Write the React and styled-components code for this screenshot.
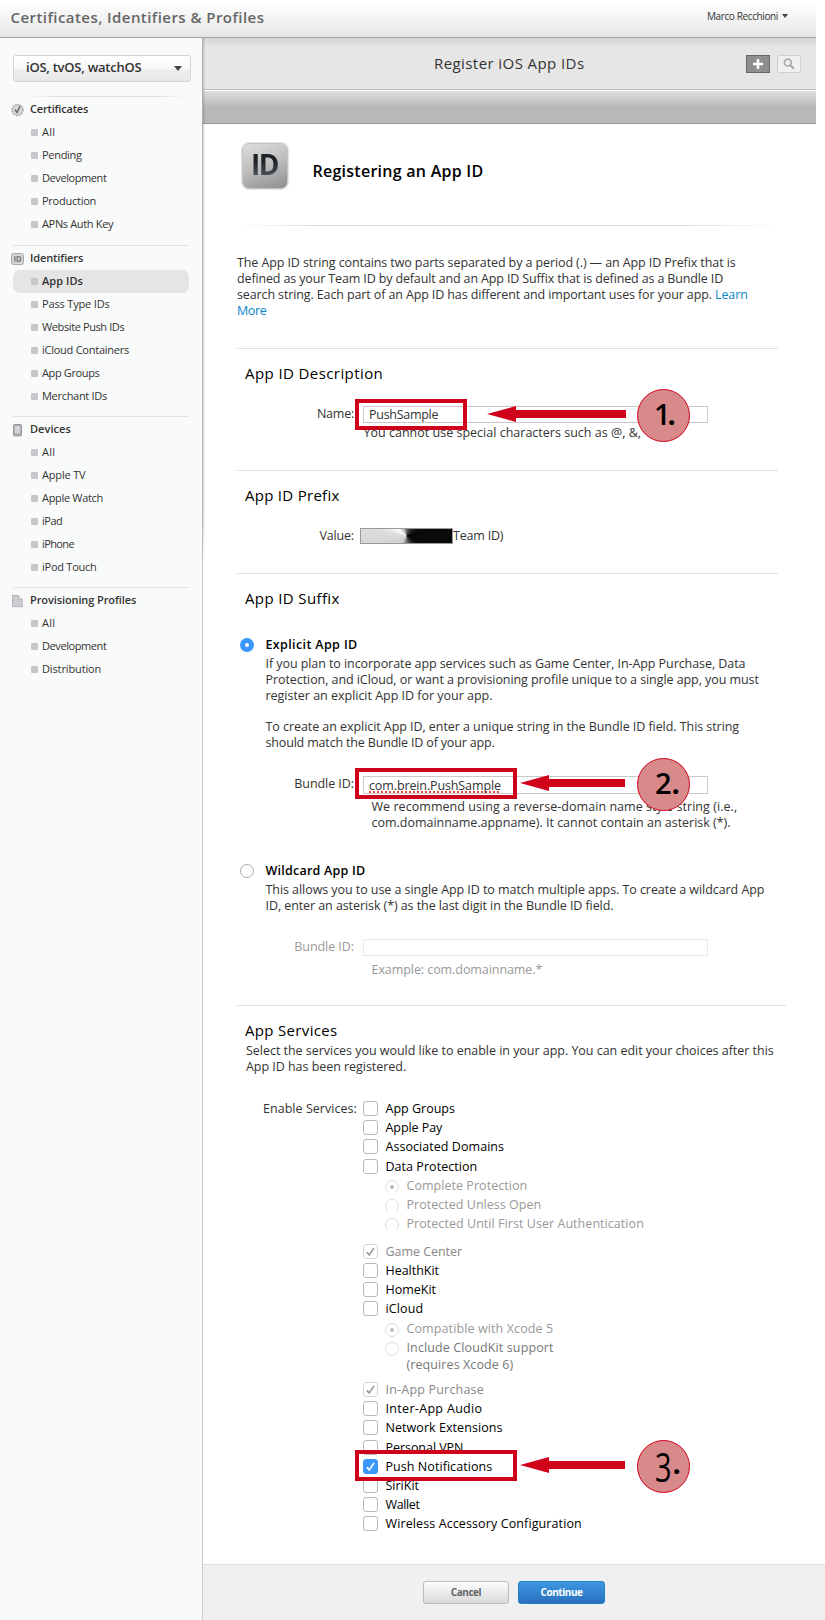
import React from "react";
import styled, { createGlobalStyle, css } from "styled-components";

const Global = createGlobalStyle`
  * { box-sizing: border-box; }
  body { margin: 0; background: #fff; }
  h1, h2, h3, h4, p, ul { margin: 0; padding: 0; font-weight: 400; }
`;

const Page = styled.div`
  position: relative;
  width: 825px;
  height: 1620px;
  overflow: hidden;
  background: #fff;
  color: #333;
  font: 400 12.5px/16px "Open Sans", "Noto Sans", sans-serif;
  font-variant-ligatures: none;
  white-space: nowrap;
`;

const Header = styled.header`
  display: flex;
  justify-content: space-between;
  width: 816px;
  height: 38px;
  padding: 0 28px 0 10.5px;
  background: linear-gradient(#fff, #f6f6f6 40%, #e6e6e6);
  border-bottom: 1px solid #a5a5a5;
`;
const SiteTitle = styled.h1`
  font-size: 15px;
  font-weight: 600;
  line-height: 34px;
  letter-spacing: 0.44px;
  color: #666;
`;
const User = styled.div`
  display: flex;
  align-items: center;
  gap: 4px;
  height: 32px;
  font-size: 10px;
  line-height: 32px;
  letter-spacing: -0.38px;
`;
const Caret = styled.i`
  border: solid transparent;
  border-width: 4px 3.5px 0;
  border-top-color: #444;
`;

const Body = styled.div`
  display: flex;
`;
const Sidebar = styled.nav`
  position: relative;
  flex: none;
  width: 203px;
  height: 1582px;
  padding: 17px 13px 0;
  background: #f9fbfa;
  border-right: 1px solid #c9caca;
  &::after {
    content: "";
    position: absolute;
    left: 202px;
    top: 0;
    width: 3px;
    height: 530px;
    background: linear-gradient(90deg, rgba(0, 0, 0, 0.14), rgba(0, 0, 0, 0.1) 60%, rgba(0, 0, 0, 0.03));
    mask-image: linear-gradient(#000 90%, transparent);
  }
`;
const Platform = styled.div`
  display: flex;
  justify-content: space-between;
  align-items: center;
  width: 178px;
  height: 27px;
  padding: 0 8px 0 12px;
  border: 1px solid #d3d3d3;
  border-radius: 3px;
  background: linear-gradient(#fff, #f8f8f8 50%, #efefef 51%, #e8e8e8);
  font-size: 13px;
  font-weight: 600;
  line-height: 21px;
  letter-spacing: -0.24px;
  color: #333;
`;
const PlatformName = styled.span`
  padding-bottom: 3px;
`;
const PlatformCaret = styled(Caret)`
  border-width: 5px 4px 0;
`;
const FadeRule = styled.div`
  width: 158px;
  height: 1px;
  margin: 14px 0 1px 15px;
  background: linear-gradient(90deg, transparent, #ddd 20%, #ddd 80%, transparent);
`;
const Group = styled.section`
  padding-bottom: ${(p) => p.$below || 0}px;
`;
const Separator = styled.div`
  width: 176px;
  height: 1px;
  margin-bottom: ${(p) => p.$gap}px;
  background: #e0e1e1;
`;
const GroupTitle = styled.h2`
  display: flex;
  align-items: center;
  height: 23px;
  margin-left: -3px;
  font-size: 11px;
  font-weight: 600;
  line-height: 21px;
  letter-spacing: ${(p) => p.$ls}px;
  & > span { padding-bottom: 2px; }
`;
const GroupIcon = styled.svg`
  width: 16px;
  height: 16px;
  margin-right: 4px;
`;
const Item = styled.a`
  display: flex;
  align-items: center;
  width: 176px;
  height: 23px;
  padding-left: 18px;
  border-radius: 7px;
  font-size: 11px;
  line-height: 21px;
  letter-spacing: ${(p) => p.$ls}px;
  ${(p) => p.$active && css`background: #e5e5e5; font-weight: 600;`}
  & > span { padding-bottom: 2px; }
`;
const Bullet = styled.i`
  width: 7px;
  height: 7px;
  margin: 0 4px 0 0;
  border-radius: 1px;
  background: #c6c7ca;
`;

const Main = styled.main`
  width: 622px;
  height: 1582px;
  display: flex;
  flex-direction: column;
`;
const Toolbar = styled.div`
  display: flex;
  justify-content: flex-end;
  align-items: flex-start;
  gap: 7px;
  width: 613px;
  height: 53px;
  padding: 17px 15px 0 0;
  background: linear-gradient(#d4d4d4, #e6e6e6 9px);
  border-bottom: 1px solid #fff;
  box-shadow: inset 0 -1px #bababa;
`;
const ToolbarTitle = styled.h2`
  flex: 1;
  padding-left: 231px;
  font-size: 15px;
  line-height: 20px;
  margin-top: -2px;
  letter-spacing: 0.42px;
`;
const ToolButton = styled.span`
  display: grid;
  place-items: center;
  width: 24px;
  height: 18px;
  border: 1px solid ${(p) => (p.$dark ? "#686868" : "#cfcfcf")};
  border-radius: ${(p) => (p.$dark ? 0 : 2)}px;
  background: ${(p) => (p.$dark ? "#8f8f8f" : "#f0f0f0")};
`;
const Band = styled.div`
  width: 613px;
  height: 33px;
  background: linear-gradient(#dfdfdf, #b8b8b8 50%);
  border-bottom: 1px solid #989898;
`;
const Content = styled.div`
  flex: 1;
  padding: 19px 0 0 34px;
`;
const TitleRow = styled.div`
  display: flex;
  align-items: center;
  height: 46px;
  padding-left: 4.5px;
`;
const IdBadge = styled.div`
  display: grid;
  place-items: center;
  width: 46px;
  height: 46px;
  margin-right: 25px;
  border: 1px solid #c4c4c4;
  border-radius: 7px;
  background: linear-gradient(160deg, #dedede, #bcbcbc 50%, #8e8e8e);
  box-shadow: 0 0 1px 1px #e4e4e4;
`;
const IdText = styled.span`
  margin-top: -5px;
  font-size: 28px;
  line-height: 34px;
  font-weight: 700;
  letter-spacing: -1.5px;
  background: linear-gradient(#1c2226 40%, #59616a);
  background-clip: text;
  color: transparent;
`;
const PageTitle = styled.h2`
  margin-top: 9px;
  font-size: 16px;
  font-weight: 600;
  line-height: 22px;
  letter-spacing: 0.26px;
  color: #000;
`;
const TitleRule = styled.div`
  width: 548px;
  height: 1px;
  margin: 36px 0 29px;
  background: linear-gradient(90deg, transparent, #dcdcdc 15%, #dcdcdc 80%, transparent);
`;
const Line = styled.span`
  display: block;
  letter-spacing: ${(p) => p.$ls}px;
`;
const Link = styled.a`
  color: #0b84c9;
`;
const Rule = styled.div`
  width: ${(p) => p.$w || 541}px;
  height: 1px;
  margin: ${(p) => p.$above}px 0 14px;
  background: #e1e1e1;
`;
const SectionTitle = styled.h3`
  padding-left: 8px;
  font-size: 15px;
  line-height: 20px;
  letter-spacing: ${(p) => p.$ls}px;
  color: #000;
`;
const Field = styled.div`
  display: flex;
  margin-top: ${(p) => p.$above}px;
  color: ${(p) => (p.$off ? "#999" : "#333")};
`;
const Label = styled.label`
  width: 117px;
  margin-right: ${(p) => p.$gap ?? 9}px;
  text-align: right;
  letter-spacing: ${(p) => p.$ls}px;
`;
const Input = styled.div`
  width: 345px;
  height: ${(p) => p.$h}px;
  padding-left: 5px;
  border: 1px solid ${(p) => (p.$off ? "#eaeaea" : "#c9c9c9")};
  line-height: ${(p) => (p.$h > 17 ? p.$h : p.$h - 2)}px;
  letter-spacing: ${(p) => p.$ls}px;
`;
const Misspelt = styled.span`
  text-decoration: underline dotted #f0473e 2px;
  text-decoration-skip-ink: none;
  text-underline-offset: 1px;
`;
const Mask = styled.div`
  width: 93px;
  height: 16px;
  border: 1px solid #999;
  background:
    linear-gradient(90deg, transparent 50%, #0a0a0a 66%),
    conic-gradient(from 0deg at 50% 50%, #666 0deg, #000 80deg, #111 120deg, #777 180deg, #ccc 215deg, #dcdcdc 280deg, #fff 305deg, #aaa 345deg, #666);
`;
const Help = styled.p`
  padding-left: ${(p) => p.$x}px;
  margin-top: ${(p) => p.$above}px;
  color: ${(p) => (p.$off ? "#999" : "#333")};
`;
const Option = styled.div`
  display: flex;
  margin-top: ${(p) => p.$above}px;
  padding-left: 3px;
`;
const Radio = styled.i`
  flex: none;
  width: 14px;
  height: 14px;
  margin: 1px 11.5px 0 0;
  border: ${(p) => (p.$on ? "5px solid #3b97fb" : "1px solid #aaa")};
  border-radius: 50%;
  background: #fff;
`;
const OptionTitle = styled.h4`
  font-weight: 600;
  color: #000;
  letter-spacing: ${(p) => p.$ls}px;
`;
const OptionText = styled.p`
  margin-top: ${(p) => p.$above}px;
`;
const Intro = styled.p`
  padding-left: 9px;
  margin-top: 3px;
`;
const Services = styled.div`
  display: flex;
  margin-top: 24px;
  padding-left: 26px;
  line-height: 19.2px;
`;
const ServicesLabel = styled.span`
  width: 99.5px;
  letter-spacing: 0.04px;
`;
const ServiceList = styled.div`
  display: flex;
  flex-direction: column;
`;
const Service = styled.div`
  display: flex;
  height: ${(p) => p.$h || 19.2}px;
  margin-top: ${(p) => p.$above || 0}px;
  padding-left: ${(p) => (p.$sub ? 22 : 0)}px;
  letter-spacing: ${(p) => p.$ls}px;
  color: ${(p) => p.$color || "#000"};
`;
const Check = styled.span`
  display: grid;
  place-items: center;
  width: 15px;
  height: 15px;
  margin: 2px 8px 0 0;
  border: 1px solid ${(p) => (p.$on ? "#3b97fb" : p.$off ? "#d6d6d6" : "#b8b8b8")};
  border-radius: 3px;
  background: ${(p) => (p.$on ? "#3b97fb" : "#fff")};
`;
const RadioClip = styled.span`
  height: ${(p) => (p.$clip ? 12 : 14)}px;
  margin: 4px 8px 0 0;
  overflow: hidden;
`;
const SmallRadio = styled.span`
  display: grid;
  place-items: center;
  width: 14px;
  height: 14px;
  border: 1px solid #dcdcdc;
  border-radius: 50%;
  &::after {
    content: "";
    width: 4px;
    height: 4px;
    border-radius: 50%;
    background: ${(p) => (p.$on ? "#bbb" : "transparent")};
  }
`;
const ServiceName = styled.span`
  & > span { display: block; line-height: 16px; letter-spacing: 0.09px; }
`;

const Footer = styled.footer`
  display: flex;
  gap: 9px;
  height: 56px;
  padding: 16px 0 0 220px;
  border-top: 1px solid #dedede;
  background: #f0f0f0;
`;
const Button = styled.button`
  width: ${(p) => (p.$primary ? 87 : 86)}px;
  height: 23px;
  padding: 0 0 1px;
  border: 1px solid ${(p) => (p.$primary ? "#2080c8" : "#bcbcbc")};
  border-radius: 3px;
  background: ${(p) => (p.$primary ? "linear-gradient(#3d97e0, #2a70bf)" : "linear-gradient(#fdfdfd, #d9d9d9)")};
  color: ${(p) => (p.$primary ? "#fff" : "#666")};
  font: 700 10px/20px "Open Sans", sans-serif;
  letter-spacing: -0.45px;
`;

const Highlight = styled.div`
  position: absolute;
  left: 355px;
  top: ${(p) => p.$y}px;
  width: ${(p) => p.$w}px;
  height: 31px;
  border: 4px solid #d0021b;
`;
const ArrowSvg = styled.svg`
  position: absolute;
  left: ${(p) => p.$x}px;
  top: ${(p) => p.$y}px;
`;
const Step = styled.div`
  position: absolute;
  left: 637px;
  top: ${(p) => p.$y}px;
  display: flex;
  width: 53px;
  height: 53px;
  padding: ${(p) => p.$top}px 0 0 ${(p) => p.$pad}px;
  border: 1px solid #d0021b;
  border-radius: 50%;
  background: #d88a8a;
  color: #000;
  font-size: 29px;
  font-weight: ${(p) => p.$weight};
  line-height: 40px;
`;
const Digit = styled.span`
  ${(p) => p.$old && css`transform: translateY(3px) scaleY(1.38);`}
`;
const Dot = styled.span`
  margin-left: ${(p) => p.$gap}px;
  font-weight: 700;
  transform: translateY(${(p) => p.$dy || 0}px);
`;

const icons = {
  seal: (
    <GroupIcon viewBox="0 0 16 16">
      <circle cx="7.5" cy="8" r="5.2" fill="#d6d7d8" stroke="#c2c3c4" strokeWidth="1" />
      <circle cx="7.5" cy="8" r="5.6" fill="none" stroke="#b0b1b2" strokeWidth="1.6" strokeDasharray="1.6 1.33" />
      <path d="M5 7.8l2 2.6L10.2 4" fill="none" stroke="#666" strokeWidth="1.4" />
    </GroupIcon>
  ),
  id: (
    <GroupIcon viewBox="0 0 16 16">
      <rect x="1.5" y="2.5" width="12" height="11" rx="2" fill="#d4d5d6" stroke="#a7a8aa" />
      <path d="M4.8 5.2v5.6M7.2 5.7v4.6h1.3c3 0 3-4.6 0-4.6z" fill="none" stroke="#77797c" strokeWidth="1.3" />
    </GroupIcon>
  ),
  device: (
    <GroupIcon viewBox="0 0 16 16">
      <rect x="3.5" y="2.5" width="8" height="11.4" rx="1" fill="#a8a9ad" stroke="#98999c" />
      <rect x="4.8" y="4" width="5.4" height="7.4" fill="#d3d4d8" />
    </GroupIcon>
  ),
  doc: (
    <GroupIcon viewBox="0 0 16 16">
      <path d="M2.5 2.5h6l3.8 3.8v7.4H2.5z" fill="#ccccd3" stroke="#b4b5ba" />
      <path d="M8.5 2.5v3.8h3.8" fill="#f2f2f4" stroke="#b4b5ba" />
    </GroupIcon>
  ),
};

const groups = [
  { icon: "seal", title: "Certificates", ls: -0.19, below: 9, items: [["All", 0.2], ["Pending", -0.3], ["Development", -0.41], ["Production", -0.25], ["APNs Auth Key", -0.34]] },
  { icon: "id", title: "Identifiers", ls: -0.11, gap: 1, below: 8, items: [["App IDs", 0.04, true], ["Pass Type IDs", -0.16], ["Website Push IDs", -0.39], ["iCloud Containers", -0.25], ["App Groups", -0.37], ["Merchant IDs", -0.3]] },
  { icon: "device", title: "Devices", ls: 0.06, gap: 1, below: 8, items: [["All", 0.2], ["Apple TV", -0.18], ["Apple Watch", -0.32], ["iPad", -0.5], ["iPhone", -0.6], ["iPod Touch", -0.25]] },
  { icon: "doc", title: "Provisioning Profiles", ls: -0.1, gap: 1, items: [["All", 0.2], ["Development", -0.41], ["Distribution", -0.13]] },
];

const G = "#999";
const services = [
  { name: "App Groups", ls: 0 },
  { name: "Apple Pay", ls: -0.07 },
  { name: "Associated Domains", ls: 0.05 },
  { name: "Data Protection", ls: 0.04 },
  { name: "Complete Protection", ls: 0.04, sub: true, on: true, clip: true, color: G },
  { name: "Protected Unless Open", ls: 0.03, sub: true, clip: true, color: G },
  { name: "Protected Until First User Authentication", ls: 0.05, sub: true, clip: true, color: G },
  { name: "Game Center", ls: -0.04, above: 8.6, locked: true, color: "#888" },
  { name: "HealthKit", ls: -0.03 },
  { name: "HomeKit", ls: -0.02 },
  { name: "iCloud", ls: 0.13 },
  { name: "Compatible with Xcode 5", ls: 0.11, sub: true, on: true, color: G },
  { name: "Include CloudKit support", more: "(requires Xcode 6)", ls: 0.12, sub: true, color: "#777", h: 35.2 },
  { name: "In-App Purchase", ls: 0.2, above: 7, locked: true, color: "#888" },
  { name: "Inter-App Audio", ls: 0.32 },
  { name: "Network Extensions", ls: 0.06 },
  { name: "Personal VPN", ls: -0.05 },
  { name: "Push Notifications", ls: 0.06, on: true },
  { name: "SiriKit", ls: -0.01 },
  { name: "Wallet", ls: -0.36 },
  { name: "Wireless Accessory Configuration", ls: 0.11 },
];

const Tick = ({ color }) => (
  <svg width="11" height="11" viewBox="0 0 11 11">
    <path d="M1.8 6.2l2.4 2.7L9 2" fill="none" stroke={color} strokeWidth="1.6" />
  </svg>
);

const Arrow = ({ x, y, w }) => (
  <ArrowSvg $x={x} $y={y} width={w} height="16" viewBox={`0 0 ${w} 16`}>
    <path d={`M0 8L29 0V4H${w}V12H29V16z`} fill="#d0021b" />
  </ArrowSvg>
);

export default function App() {
  return (
    <Page>
      <Global />
      <Header>
        <SiteTitle>Certificates, Identifiers &amp; Profiles</SiteTitle>
        <User>Marco Recchioni <Caret /></User>
      </Header>
      <Body>
        <Sidebar>
          <Platform><PlatformName>iOS, tvOS, watchOS</PlatformName><PlatformCaret /></Platform>
          <FadeRule />
          {groups.map((g) => (
            <Group key={g.title} $below={g.below}>
              {g.gap && <Separator $gap={g.gap} />}
              <GroupTitle $ls={g.ls}>{icons[g.icon]}<span>{g.title}</span></GroupTitle>
              {g.items.map(([name, ls, active]) => (
                <Item key={name} $ls={ls} $active={active}><Bullet /><span>{name}</span></Item>
              ))}
            </Group>
          ))}
        </Sidebar>
        <Main>
          <Toolbar>
            <ToolbarTitle>Register iOS App IDs</ToolbarTitle>
            <ToolButton $dark>
              <svg width="12" height="12" viewBox="0 0 12 12"><path d="M6 1v10M1 6h10" stroke="#fff" strokeWidth="2.6" /></svg>
            </ToolButton>
            <ToolButton>
              <svg width="12" height="12" viewBox="0 0 12 12"><circle cx="4.8" cy="4.6" r="3.4" fill="none" stroke="#aaa" strokeWidth="1.7" /><path d="M7.3 7.2l3.6 3.6" stroke="#aaa" strokeWidth="2.2" /></svg>
            </ToolButton>
          </Toolbar>
          <Band />
          <Content>
            <TitleRow>
              <IdBadge><IdText>ID</IdText></IdBadge>
              <PageTitle>Registering an App ID</PageTitle>
            </TitleRow>
            <TitleRule />
            <p>
              <Line $ls={-0.1}>The App ID string contains two parts separated by a period (.) — an App ID Prefix that is</Line>
              <Line $ls={-0.14}>defined as your Team ID by default and an App ID Suffix that is defined as a Bundle ID</Line>
              <Line $ls={-0.12}>search string. Each part of an App ID has different and important uses for your app. <Link>Learn</Link></Line>
              <Line $ls={-0.4}><Link>More</Link></Line>
            </p>
            <Rule $above={29} />
            <SectionTitle $ls={0.41}>App ID Description</SectionTitle>
            <Field $above={23}>
              <Label $ls={-0.24}>Name:</Label>
              <Input $h={17} $ls={-0.28}>PushSample</Input>
            </Field>
            <Help $x={126.5} $above={2}><Line $ls={0.01}>You cannot use special characters such as @, &amp;,</Line></Help>
            <Rule $above={29} />
            <SectionTitle $ls={0.28}>App ID Prefix</SectionTitle>
            <Field $above={23}>
              <Label $ls={-0.15} $gap={6}>Value:</Label>
              <Mask />
              <Line $ls={-0.2}>Team ID)</Line>
            </Field>
            <Rule $above={29} />
            <SectionTitle $ls={0.37}>App ID Suffix</SectionTitle>
            <Option $above={29}>
              <Radio $on />
              <div>
                <OptionTitle $ls={0.37}>Explicit App ID</OptionTitle>
                <OptionText $above={3}>
                  <Line $ls={-0.07}>If you plan to incorporate app services such as Game Center, In-App Purchase, Data</Line>
                  <Line $ls={-0.07}>Protection, and iCloud, or want a provisioning profile unique to a single app, you must</Line>
                  <Line $ls={-0.02}>register an explicit App ID for your app.</Line>
                </OptionText>
                <OptionText $above={15}>
                  <Line $ls={-0.06}>To create an explicit App ID, enter a unique string in the Bundle ID field. This string</Line>
                  <Line $ls={-0.17}>should match the Bundle ID of your app.</Line>
                </OptionText>
              </div>
            </Option>
            <Field $above={25}>
              <Label $ls={-0.06}>Bundle ID:</Label>
              <Input $h={18} $ls={-0.12}><Misspelt>com.brein.PushSample</Misspelt></Input>
            </Field>
            <Help $x={134.5} $above={5}>
              <Line $ls={0.05}>We recommend using a reverse-domain name style string (i.e.,</Line>
              <Line $ls={-0.02}>com.domainname.appname). It cannot contain an asterisk (*).</Line>
            </Help>
            <Option $above={32}>
              <Radio />
              <div>
                <OptionTitle $ls={0.23}>Wildcard App ID</OptionTitle>
                <OptionText $above={3}>
                  <Line $ls={-0.06}>This allows you to use a single App ID to match multiple apps. To create a wildcard App</Line>
                  <Line $ls={-0.08}>ID, enter an asterisk (*) as the last digit in the Bundle ID field.</Line>
                </OptionText>
              </div>
            </Option>
            <Field $above={25} $off>
              <Label $ls={-0.06}>Bundle ID:</Label>
              <Input $h={17} $off />
            </Field>
            <Help $x={134.5} $above={6} $off><Line $ls={-0.07}>Example: com.domainname.*</Line></Help>
            <Rule $w={549} $above={27} />
            <SectionTitle $ls={0.33}>App Services</SectionTitle>
            <Intro>
              <Line $ls={-0.03}>Select the services you would like to enable in your app. You can edit your choices after this</Line>
              <Line $ls={-0.04}>App ID has been registered.</Line>
            </Intro>
            <Services>
              <ServicesLabel>Enable Services:</ServicesLabel>
              <ServiceList>
                {services.map((s) => (
                  <Service key={s.name} $ls={s.ls} $sub={s.sub} $above={s.above} $color={s.color} $h={s.h}>
                    {s.sub ? (
                      <RadioClip $clip={s.clip}><SmallRadio $on={s.on} /></RadioClip>
                    ) : (
                      <Check $on={s.on} $off={s.locked}>
                        {(s.on || s.locked) && <Tick color={s.on ? "#fff" : "#999"} />}
                      </Check>
                    )}
                    <ServiceName>{s.name}{s.more && <span>{s.more}</span>}</ServiceName>
                  </Service>
                ))}
              </ServiceList>
            </Services>
          </Content>
          <Footer>
            <Button>Cancel</Button>
            <Button $primary>Continue</Button>
          </Footer>
        </Main>
      </Body>

      <Highlight $y={399} $w={112} />
      <Arrow x={486.5} y={406} w={139} />
      <Step $y={389} $top={4} $pad={16} $weight={600}><Digit>1</Digit><Dot $gap={-3}>.</Dot></Step>
      <Highlight $y={768} $w={162} />
      <Arrow x={519.5} y={775} w={105.5} />
      <Step $y={758} $top={4} $pad={17} $weight={600}><Digit>2</Digit><Dot $gap={0}>.</Dot></Step>
      <Highlight $y={1450} $w={162} />
      <Arrow x={519.5} y={1457} w={105.5} />
      <Step $y={1440} $top={4} $pad={17} $weight={500}><Digit $old>3</Digit><Dot $gap={1} $dy={-2}>.</Dot></Step>
    </Page>
  );
}
